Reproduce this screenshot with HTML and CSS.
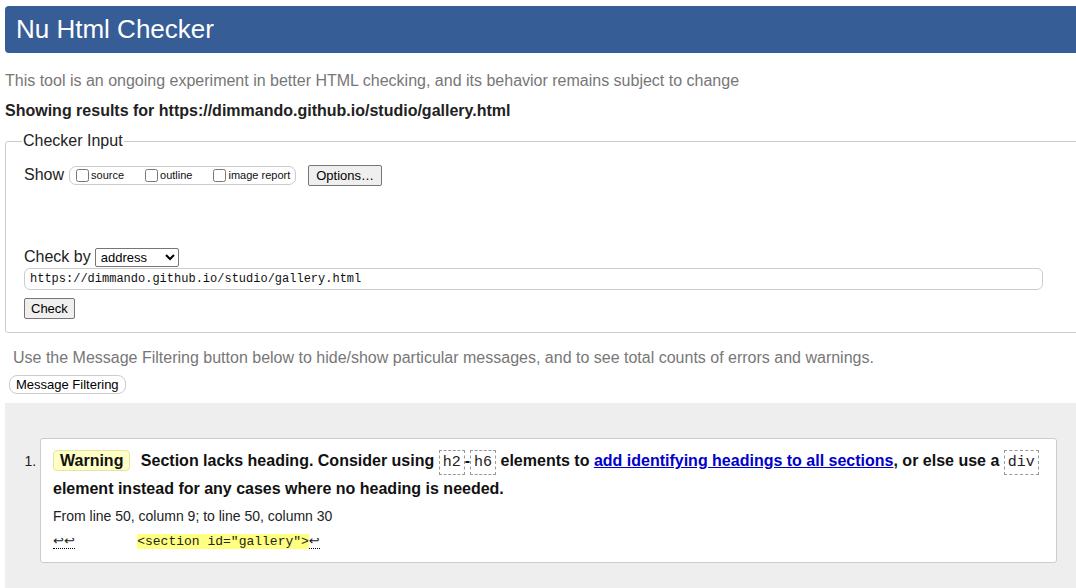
FILE: index.html
```html
<!DOCTYPE html>
<html>
<head>
<meta charset="utf-8">
<title>Nu Html Checker</title>
<link rel="stylesheet" href="styles.css">
</head>
<body>
<div class="page">
  <h1 class="title-bar">Nu Html Checker</h1>
  <p class="intro">This tool is an ongoing experiment in better HTML checking, and its behavior remains subject to change</p>
  <p class="showing">Showing results for https://dimmando.github.io/studio/gallery.html</p>
  <fieldset class="checker">
    <legend>Checker Input</legend>
    <div class="show-row">
      <span class="show-label">Show</span>
      <span class="show-group">
        <label class="opt"><input type="checkbox">source</label>
        <label class="opt"><input type="checkbox">outline</label>
        <label class="opt"><input type="checkbox">image report</label>
      </span>
      <button class="btn options">Options…</button>
    </div>
    <div class="checkby-row">
      <span class="show-label by">Check by</span>
      <select class="sel"><option>address</option></select>
    </div>
    <div class="url">https://dimmando.github.io/studio/gallery.html</div>
    <button class="btn check">Check</button>
  </fieldset>
  <p class="filter-note">Use the Message Filtering button below to hide/show particular messages, and to see total counts of errors and warnings.</p>
  <button class="btn filter">Message Filtering</button>
  <div class="results">
    <ol class="msgs">
      <li class="msg">
        <p class="msg-text"><span class="badge">Warning</span> <span class="txt">Section lacks heading. Consider using <code>h2</code>-<code>h6</code> elements to <a href="#">add identifying headings to all sections</a>, or else use a <code>div</code> element instead for any cases where no heading is needed.</span></p>
        <p class="loc">From line 50, column 9; to line 50, column 30</p>
        <p class="extract"><span class="lf">↩↩</span>        <b class="hl">&lt;section id="gallery"&gt;</b><span class="lf">↩</span></p>
      </li>
    </ol>
  </div>
</div>
</body>
</html>
```
FILE: styles.css
```css
html, body {
  margin: 0;
  padding: 0;
  overflow: hidden;
  background: #fff;
}
body {
  font-family: "Liberation Sans", Arial, sans-serif;
  font-size: 16px;
  color: #111;
}
.page {
  width: 1100px;
  padding: 6px 0 0 5px;
}
.title-bar {
  margin: 0;
  height: 47px;
  background: #365d95;
  color: #fff;
  font-weight: normal;
  font-size: 26px;
  line-height: 47px;
  padding-left: 11px;
  border-radius: 4px 0 0 4px;
}
.intro {
  margin: 18px 0 0 0;
  color: #777;
  line-height: 20px;
}
.showing {
  margin: 10px 0 0 0;
  font-weight: bold;
  color: #222;
  line-height: 20px;
}
.checker {
  margin: 11px 0 0 0;
  padding: 10px 18px 13px 18px;
  border: 1px solid #ccc;
  border-radius: 3px;
  min-width: 0;
}
.checker legend {
  padding: 0 1px;
  color: #222;
  margin-left: -2px;
}
.show-row {
  display: flex;
  align-items: center;
  height: 24px;
  margin-top: 3px;
}
.show-label {
  color: #222;
  margin-right: 5px;
}
.show-label.by {
  margin-right: 4px;
}
.show-group {
  display: inline-flex;
  align-items: center;
  border: 1px solid #ccc;
  border-radius: 7px;
  height: 17px;
  padding: 0 5px 0 3px;
  font-size: 11px;
  margin-right: 11px;
  color: #111;
}
.opt {
  display: inline-flex;
  align-items: center;
  margin-right: 18px;
}
.opt:last-child { margin-right: 0; }
.opt input {
  width: 13px;
  height: 13px;
  margin: 0 2px 0 3px;
}
.btn {
  font-family: "Liberation Sans", Arial, sans-serif;
  font-size: 13px;
  color: #000;
  background: #efefef;
  border: 1px solid #767676;
  border-radius: 2px;
  padding: 1px 6px;
  height: 21px;
}
.options { padding: 1px 7px; margin-left: 1px; }
.checkby-row {
  display: flex;
  align-items: center;
  margin-top: 59px;
  height: 22px;
}
.sel {
  font-family: "Liberation Sans", Arial, sans-serif;
  font-size: 13px;
  width: 84px;
  height: 19px;
  border: 1px solid #767676;
  border-radius: 2px;
  background: #fff;
  padding: 0 0 0 1px;
  color: #000;
}
.url {
  margin-top: 0;
  width: 1012px;
  height: 20px;
  border: 1px solid #ccc;
  border-radius: 6px;
  font-family: "Liberation Mono", monospace;
  font-size: 12px;
  line-height: 20px;
  padding-left: 5px;
  color: #111;
}
.check {
  margin-top: 8px;
  display: block;
}
.filter-note {
  margin: 15px 0 0 8px;
  color: #777;
  line-height: 20px;
}
.filter {
  margin: 7px 0 0 4px;
  border-color: #ccc;
  border-radius: 8px;
  background: #fff;
  padding: 1px 6px;
  height: 19px;
  display: block;
}
.results {
  margin-top: 9px;
  background: #eee;
  padding: 35px 0 27px 0;
}
.msgs {
  margin: 0;
  padding: 0 0 0 35px;
  width: 1017px;
}
.msg {
  background: #fff;
  border: 1px solid #ccc;
  border-radius: 3px;
  padding: 8px 12px 11px 12px;
  font-size: 14px;
  color: #222;
}
.msg::marker {
  color: #222;
  font-size: 14px;
}
.msg-text {
  margin: 0;
  font-size: 16px;
  font-weight: bold;
  line-height: 28px;
  color: #111;
}
.badge {
  display: inline-block;
  background: #ffffc5;
  border: 1px solid #e5e5a0;
  border-radius: 4px;
  padding: 0 6px;
  line-height: 19px;
  margin-right: 6px;
}
.msg-text code {
  font-family: "Liberation Mono", monospace;
  font-weight: normal;
  font-size: 15px;
  line-height: 16px;
  border: 1px dashed #999;
  padding: 3px 3px;
  color: #222;
}
.msg-text a {
  color: #00c;
}
.loc {
  margin: 4px 0 0 0;
  line-height: 18px;
  color: #222;
}
.extract {
  margin: 8px 0 0 0;
  font-family: "Liberation Mono", monospace;
  font-size: 13px;
  white-space: pre;
  line-height: 18px;
}
.lf {
  font-family: "DejaVu Sans", sans-serif;
  font-size: 13px;
  line-height: 10px;
  border-bottom: 1px dotted #000;
}
.hl {
  font-weight: normal;
  background: #ffff80;
}
```
